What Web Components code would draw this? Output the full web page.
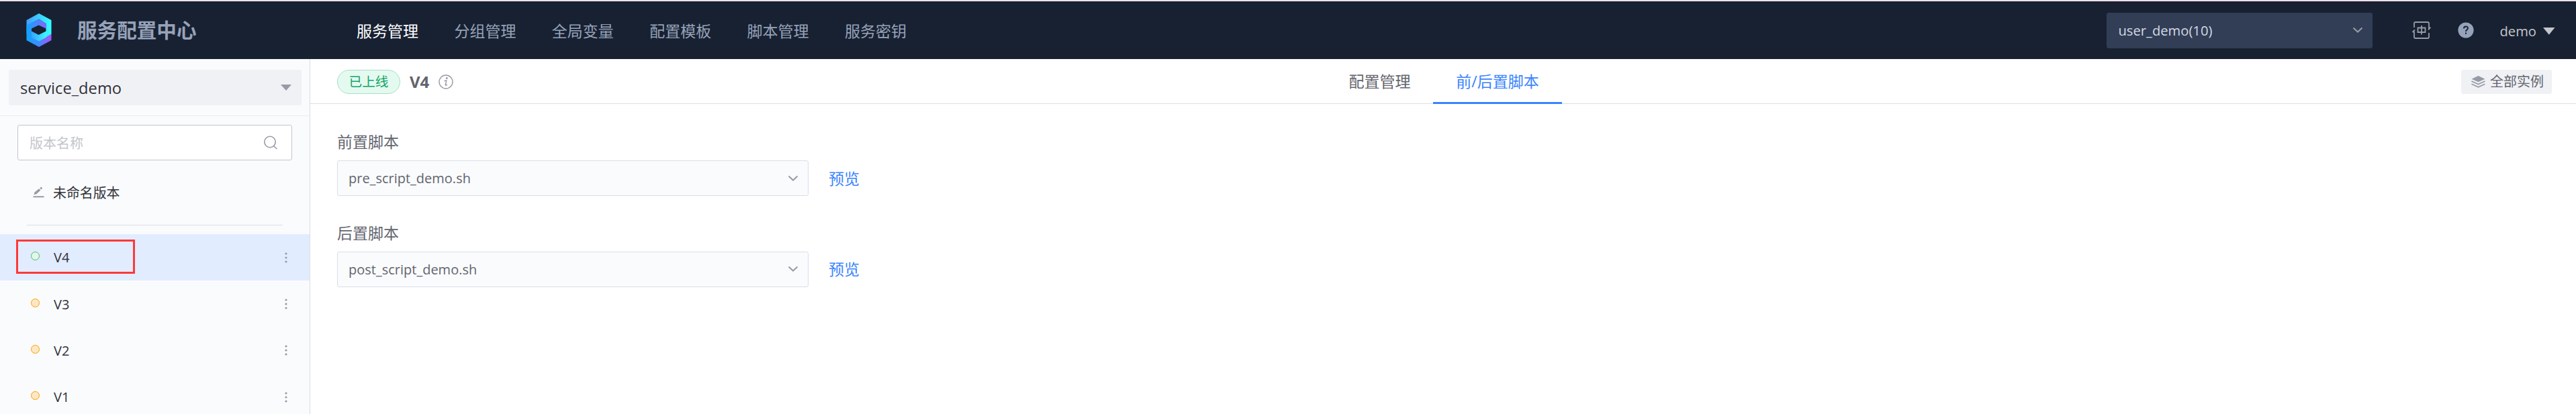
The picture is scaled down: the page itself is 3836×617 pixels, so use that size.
<!DOCTYPE html>
<html lang="zh-CN">
<head>
<meta charset="utf-8">
<title>服务配置中心</title>
<style>
html,body{margin:0;height:617px;overflow:hidden;background:#fff}
body{font-family:"Open Sans","Noto Sans CJK SC",sans-serif;color:#63656e}
</style>
</head>
<body>
<config-app></config-app>
<script>
const define=(name,css,html)=>customElements.define(name,class extends HTMLElement{
  constructor(){
    super();
    const t=document.createElement('template');
    t.innerHTML=`<style>*{box-sizing:border-box}svg{display:block;flex:none}${css}</style>${html}`;
    this.attachShadow({mode:'open'}).append(t.content.cloneNode(true));
  }
});

define('brand-logo',':host{display:block;width:38px;height:50px}',`
<svg width="38" height="50" viewBox="0 0 38 50">
<defs>
<linearGradient id="a" x1="0" y1="0" x2="1" y2="0"><stop offset="0" stop-color="#459cff"/><stop offset="1" stop-color="#3ff"/></linearGradient>
<linearGradient id="b" x1="0" y1="0" x2="1" y2="0"><stop offset="0" stop-color="#0aa8ff"/><stop offset=".45" stop-color="#3c8cff"/><stop offset="1" stop-color="#a855f7"/></linearGradient>
<linearGradient id="c" x1="0" y1="0" x2="1" y2="0"><stop offset="0" stop-color="#0fa4ff"/><stop offset="1" stop-color="#7f68ff"/></linearGradient>
<linearGradient id="d" x1="0" y1="0" x2="1" y2="0"><stop offset="0" stop-color="#38a4ff"/><stop offset="1" stop-color="#3ef4ff"/></linearGradient>
</defs>
<path fill="url(#b)" d="M.5 17.500 8 13v20l11 8 18.500-11v10L19 50 .5 40z"/>
<path fill="url(#a)" d="M19 0 37.500 10v20.500L30 35V15.500L19 8.500.5 18v-8z"/>
<path fill="url(#c)" d="M.5 17.500 19 8.500l11 7V27H8V24l-7.500 6z"/>
<path fill="url(#d)" d="M8 24v12l11 5.500 11-6V22l-11 8z"/>
<path fill="#182132" d="M8 26.500v-4l10.500-5 11 5v4l-11 5.500z"/>
</svg>`);

define('nav-item',`:host{display:block;font-size:23px;line-height:40px;color:#96a2b9;width:145.400px;white-space:nowrap}:host([active]){color:#fff}`,`<slot></slot>`);

define('chevron-down',`:host{display:block;color:#979ba5}`,`<svg width="16" height="10" viewBox="0 0 16 10"><path d="M1.500 1.500 8 7.600l6.500-6.100" fill="none" stroke="currentColor" stroke-width="2"/></svg>`);

define('top-bar',`
:host{display:flex;align-items:center;height:88px;background:#182132;border-top:2px solid #f0dfe8;color:#96a2b9;box-sizing:border-box}
brand-logo{margin-left:39px}
h1{margin:0 0 0 38px;width:416px;font-size:29.600px;line-height:44px;font-weight:700;white-space:nowrap}
nav{display:flex;flex:1;padding-top:2px}
.biz{display:flex;align-items:center;justify-content:space-between;width:396px;height:53px;padding:0 14px 0 17px;background:#323e56;border-radius:3px;font-size:20.200px;color:#d3d9e4;margin-right:59px}
.help{margin-left:40px}
.user{display:flex;align-items:center;gap:10px;margin:0 31px 0 38px;font-size:20.200px;color:#c4c6cc;padding-top:2px}
`,`
<brand-logo></brand-logo><h1>服务配置中心</h1>
<nav><nav-item active>服务管理</nav-item><nav-item>分组管理</nav-item><nav-item>全局变量</nav-item><nav-item>配置模板</nav-item><nav-item>脚本管理</nav-item><nav-item>服务密钥</nav-item></nav>
<div class="biz"><span>user_demo(10)</span><chevron-down></chevron-down></div>
<svg width="28" height="26" viewBox="0 0 28 26" fill="none" stroke="#979ba5" stroke-width="1.800"><path d="M3 9V3q0-2 2-2h18q2 0 2 2v9M25 17v6q0 2-2 2H5q-2 0-2-2v-8"/><path d="M24 12.500 27.500 8.500M.5 16 4 12.500"/><path d="M8.500 9.500h11v6.500h-11zM14 6v13.500"/></svg>
<svg class="help" width="24" height="24" viewBox="0 0 24 24"><circle cx="12" cy="12" r="11.600" fill="#96a2b9"/><path d="M9 9.500c0-4 6-4 6-.5 0 2.300-3 2.300-3 5M12 15.500v2.300" fill="none" stroke="#182132" stroke-width="2"/></svg>
<div class="user"><span>demo</span><svg width="18" height="11" viewBox="0 0 18 11"><path d="M0 0h17.500L8.800 10.800z" fill="#c4c6cc"/></svg></div>`);

define('version-row',`
:host{display:flex;align-items:center;height:69.400px;padding:0 33px 0 46px;color:#313238;font-size:20px;box-sizing:border-box}
:host([online]){background:#e1ecff}
i{width:13px;height:13px;border:1px solid #ff9c01;background:#ffe8c3;border-radius:50%;margin-top:-4px}
:host([online]) i{border-color:#3fc06d;background:#e5f6ea}
span{flex:1;margin-left:21px}
`,`<i></i><span><slot></slot></span><svg width="4" height="16" viewBox="0 0 4 16" fill="#979ba5"><circle cx="2" cy="2" r="1.600"/><circle cx="2" cy="8" r="1.600"/><circle cx="2" cy="14" r="1.600"/></svg>`);

define('version-sidebar',`
:host{display:flex;flex:none;flex-direction:column;width:462px;height:529px;overflow:hidden;background:#fafbfd;border-right:1px solid #dcdee5;position:relative;box-sizing:border-box}
.svc{height:85px;padding:16px 12px 0 13px;border-bottom:1px solid #eaebf0;flex:none}
.svc div{display:flex;align-items:center;justify-content:space-between;height:53px;padding:0 15px 0 17px;background:#f0f1f5;border-radius:3px;font-size:23.700px;color:#313238}
.search{display:flex;flex:none;align-items:center;justify-content:space-between;height:53px;margin:13px 26px 0;padding:0 21px 0 17px;border:1px solid #c4c6cc;border-radius:3px;background:#fff;font-size:20px;color:#c4c6cc}
.draft{display:flex;flex:none;align-items:center;gap:13px;height:97px;margin:0 40px 13px;padding:0 0 2px 9px;border-bottom:1px solid #dcdee5;font-size:19.900px;color:#313238}
.mark{position:absolute;left:24px;top:269px;width:177px;height:51px;border:3px solid #ff3838}
version-row{flex:none}
`,`
<div class="svc"><div><span>service_demo</span><svg width="16" height="9" viewBox="0 0 16 9"><path d="M0 0h16L8 9z" fill="#979ba5"/></svg></div></div>
<div class="search"><span>版本名称</span><svg width="20" height="21" viewBox="0 0 20 21" fill="none" stroke="#979ba5" stroke-width="1.600"><circle cx="9" cy="9.500" r="8.200"/><path d="m14.500 15.500 4.800 4.500"/></svg></div>
<div class="draft"><svg width="17" height="17" viewBox="0 0 17 17" fill="#979ba5"><path d="M.5 14.200h16v2H.5zM1.500 12.200l1-3.800L9 3.200l2.500 2.300-6.300 5.700zM10.200 2.300 12.200.5l2 2-1.800 2z"/></svg><span>未命名版本</span></div>
<version-row online>V4</version-row><version-row>V3</version-row><version-row>V2</version-row><version-row>V1</version-row>
<div class="mark"></div>`);

define('version-header',`
:host{display:grid;grid-template-columns:1fr auto 1fr;height:67px;border-bottom:1px solid #dcdee5;box-sizing:border-box}
.left,.tabs,.right{display:flex;align-items:center}
.left{padding-left:40px}
.tag{width:94px;height:36px;border:1px solid #a5e0c6;border-radius:18px;background:#e4faf0;color:#14a568;font-size:19.700px;line-height:33px;text-align:center}
b{font-size:24px;margin:0 14px}
.tabs{font-size:23px;line-height:67px;white-space:nowrap;padding-left:3px}
.tabs span{height:67px;width:159px;text-align:center}
.tabs .on{width:192px;color:#3a84ff;border-bottom:3px solid #3a84ff}
.right{justify-content:flex-end;padding-right:36px}
.all{display:flex;align-items:center;gap:7px;width:135px;height:36px;padding-left:15px;border-radius:3px;background:#f0f1f5;font-size:20px;line-height:34px;white-space:nowrap}
`,`
<div class="left"><span class="tag">已上线</span><b>V4</b><svg width="22" height="22" viewBox="0 0 22 22" fill="none" stroke="#979ba5" stroke-width="1.400"><circle cx="11" cy="11" r="10"/><path d="M8.500 9.500 11.800 9l-1.500 6.500q0 1.200 2.700-.3"/><circle cx="12.300" cy="5.600" r=".8" fill="#979ba5"/></svg></div>
<div class="tabs"><span>配置管理</span><span class="on">前/后置脚本</span></div>
<div class="right"><div class="all"><svg width="21" height="18" viewBox="0 0 21 18" fill="#979ba5"><path d="M10.500 0 20.500 4.700l-10 4.600-10-4.600z"/><path d="m.5 8 10 4.600L20.500 8M.5 12.200l10 4.600 10-4.600" fill="none" stroke="#979ba5" stroke-width="1.800"/></svg><span>全部实例</span></div></div>`);

define('script-field',`
:host{display:block;width:900px}
label{display:block;font-size:23px;line-height:34px;height:45px}
.row{display:flex;align-items:center;gap:30px}
.sel{display:flex;align-items:center;justify-content:space-between;width:702px;height:53px;padding:0 14px 0 16px;border:1px solid #dcdee5;border-radius:3px;background:#fafbfd;font-size:20px}
a{font-size:23px;line-height:34px;color:#3a84ff}
`,`<label><slot name="label"></slot></label><div class="row"><div class="sel"><slot></slot><chevron-down></chevron-down></div><a>预览</a></div>`);

define('config-app',`
:host{display:flex;flex-direction:column;height:617px}
.body{display:flex;flex:1}
main{flex:1}
.fields{display:flex;flex-direction:column;gap:37.500px;padding:39px 40px}
`,`<top-bar></top-bar><div class="body"><version-sidebar></version-sidebar><main><version-header></version-header><div class="fields">
<script-field><span slot="label">前置脚本</span>pre_script_demo.sh</script-field>
<script-field><span slot="label">后置脚本</span>post_script_demo.sh</script-field></div></main></div>`);
</script>
</body>
</html>
